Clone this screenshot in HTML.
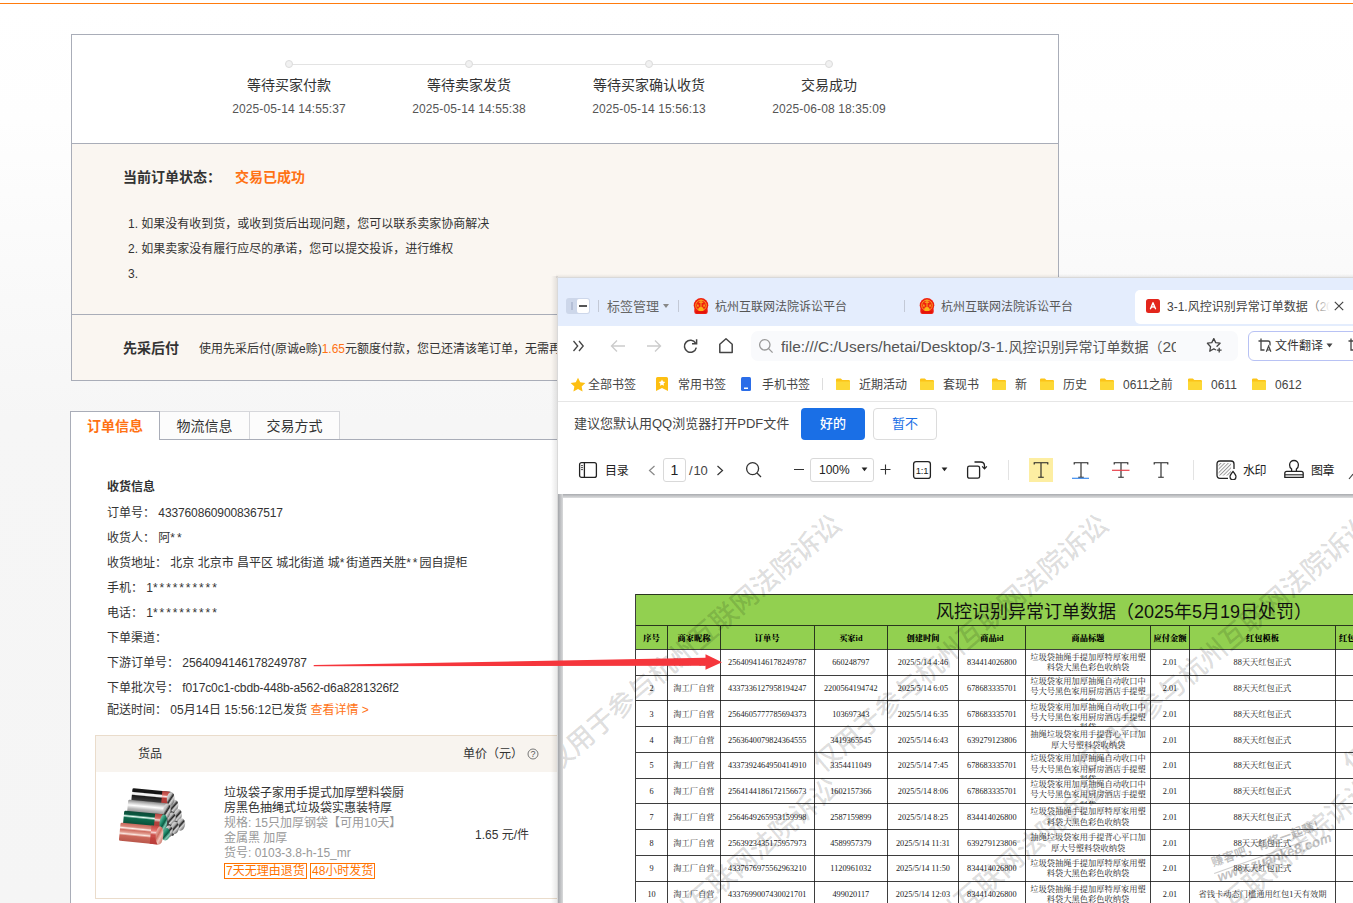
<!DOCTYPE html>
<html lang="zh-CN">
<head>
<meta charset="utf-8">
<title>订单详情</title>
<style>
*{box-sizing:border-box;margin:0;padding:0}
html,body{width:1353px;height:903px;overflow:hidden;background:#f6f6f6}
body{background:linear-gradient(180deg,#fff 0,#fefefe 120px,#f9f9f9 300px,#f6f6f6 420px,#f5f5f5 100%)}
body{position:relative;font-family:"Liberation Sans","Noto Sans CJK SC",sans-serif;font-size:12px;color:#333;-webkit-font-smoothing:antialiased}
.abs{position:absolute;white-space:nowrap}
.topline{left:0;top:3px;width:1353px;height:1px;background:#ff7b0d}
/* left page */
.box1{left:71px;top:34px;width:988px;height:347px;border:1px solid #a9adb8;background:#fff}
.box1 .beige1{left:0;top:108px;width:986px;height:171px;background:#faf6f1;border-top:1px solid #a9adb8}
.box1 .beige2{left:0;top:279px;width:986px;height:66px;background:#faf6f1;border-top:1px solid #a9adb8}
.stepline{left:289px;top:64px;width:540px;height:1px;background:#e3e3e3}
.dot{width:8px;height:8px;border-radius:50%;background:#f1f1f1;border:1px solid #dcdcdc}
.st{font-size:14px;color:#333;text-align:center;width:180px;line-height:20px}
.sd{font-size:12px;color:#555;text-align:center;width:180px;line-height:16px;margin-top:1px;letter-spacing:.12px}
.t12{font-size:12px;line-height:16px;color:#333;margin-top:1px}
.or{color:#ff7214}
.tabs{left:70px;top:411px;height:29px}
.tab{top:0;height:28px;border:1px solid #d6d7db;border-left:none;border-bottom:none;background:#fcfcfc;font-size:14px;line-height:28px;text-align:center;color:#333}
.tab.act{border:1px solid #a9adb8;border-bottom:none;background:#fff;color:#ff7214;font-weight:bold;height:29px;line-height:29px}
.info{font-size:12px;line-height:16px;color:#333}

/* browser overlay : children use page coordinates */
.br{left:0;top:0;width:1353px;height:903px;clip-path:inset(277px 0 0 557px)}
.br .win{left:558px;top:278px;width:795px;height:625px;background:#fff}
.br .shadowL{left:550px;top:278px;width:8px;height:625px;background:linear-gradient(90deg,rgba(0,0,0,0),rgba(0,0,0,.13))}
.tabstrip{left:558px;top:278px;width:795px;height:48px;background:#e4edfd}
.tt{font-size:12px;line-height:16px;color:#555}
.bk{font-size:12px;line-height:16px;color:#444}
.sep{width:1px;background:#c3c9d6}
.fold{width:14px;height:12px}

.ptitle{font-family:"Liberation Sans","Noto Sans CJK SC",sans-serif;font-size:18px;line-height:26px;color:#111;font-weight:400}
.ph{font-family:"Liberation Serif","Noto Serif CJK SC",serif;font-size:8.25px;font-weight:900;color:#000;text-align:center}
.pc{font-family:"Liberation Serif","Noto Serif CJK SC",serif;font-size:8.25px;color:#222;text-align:center}
.pm{line-height:10.3px}
.gl{background:rgba(20,20,20,.82)}
.wm{font-family:"Liberation Sans","Noto Sans CJK SC",sans-serif;font-size:27px;line-height:38px;font-weight:500;color:rgba(0,0,0,.14);transform-origin:13.5px 19px;transform:rotate(-40.6deg)}
.ast{letter-spacing:1.9px}
.n{letter-spacing:-.12px}
.fw{font-size:21px;line-height:24px;letter-spacing:2.6px;color:rgba(0,0,0,.016);pointer-events:none}
</style>
</head>
<body>
<svg width="0" height="0" style="position:absolute"><defs>
<g id="fold"><path d="M0 1.6Q0 .4 1.2 .4h3.6l1.6 1.7h6.4q1.2 0 1.2 1.2v7.5q0 1.2-1.2 1.2H1.2Q0 12 0 10.8z" fill="#fcc419"/><path d="M0 3.4h14v7.4q0 1.2-1.2 1.2H1.2Q0 12 0 10.8z" fill="#fdd835"/></g>
<g id="court"><rect x="1.3" y="9.500" width="13.400" height="6.400" rx="2.200" fill="#ee1c10"/><circle cx="8" cy="7.300" r="7.300" fill="#f0200f"/><circle cx="8" cy="7.400" r="5.300" fill="none" stroke="#f7a325" stroke-width="1"/><path d="M8 1.600v8.400M6.600 2.900h2.800M5.800 4.300h4.400" stroke="#f9a820" stroke-width="1" fill="none"/><path d="M3.800 8.600l1.100-2.800 1.100 2.800zM10 8.600l1.100-2.800 1.100 2.800z" fill="#fbb81a"/><ellipse cx="8" cy="11.200" rx="2.700" ry="2.100" fill="#fbb416"/><path d="M3 14h10" stroke="#e01408" stroke-width="1.600"/></g>
<g id="tee"><path d="M1.200 3.600V1.800h13.600v1.800M8 1.800v14.400M5.200 16.300h5.600" stroke="#222" stroke-width="1.100" fill="none"/></g>
</defs></svg>
<div class="abs topline"></div>

<!-- ========== LEFT PAGE ========== -->
<div class="abs box1">
  <div class="abs beige1"></div>
  <div class="abs beige2"></div>
</div>
<div class="abs stepline"></div>
<div class="abs dot" style="left:285px;top:60px"></div>
<div class="abs dot" style="left:465px;top:60px"></div>
<div class="abs dot" style="left:645px;top:60px"></div>
<div class="abs dot" style="left:825px;top:60px"></div>
<div class="abs st" style="left:199px;top:75px">等待买家付款</div>
<div class="abs st" style="left:379px;top:75px">等待卖家发货</div>
<div class="abs st" style="left:559px;top:75px">等待买家确认收货</div>
<div class="abs st" style="left:739px;top:75px">交易成功</div>
<div class="abs sd" style="left:199px;top:100px">2025-05-14 14:55:37</div>
<div class="abs sd" style="left:379px;top:100px">2025-05-14 14:55:38</div>
<div class="abs sd" style="left:559px;top:100px">2025-05-14 15:56:13</div>
<div class="abs sd" style="left:739px;top:100px">2025-06-08 18:35:09</div>

<div class="abs" style="left:123px;top:167px;font-size:14px;line-height:20px;font-weight:bold;color:#333">当前订单状态：</div>
<div class="abs or" style="left:235px;top:167px;font-size:14px;line-height:20px;font-weight:bold">交易已成功</div>
<div class="abs t12" style="left:128px;top:215px">1. 如果没有收到货，或收到货后出现问题，您可以联系卖家协商解决</div>
<div class="abs t12" style="left:128px;top:240px">2. 如果卖家没有履行应尽的承诺，您可以提交投诉，进行维权</div>
<div class="abs t12" style="left:128px;top:265px">3.</div>

<div class="abs" style="left:123px;top:338px;font-size:14px;line-height:20px;font-weight:bold;color:#333">先采后付</div>
<div class="abs t12" style="left:199px;top:340px">使用先采后付(原诚e赊)<span class="or">1.65</span>元额度付款，您已还清该笔订单，无需再</div>

<!-- tabs -->
<div class="abs" id="panel" style="left:71px;top:440px;width:500px;height:463px;background:#fff"></div>
<div class="abs" style="left:160px;top:439px;width:400px;height:1px;background:#a9adb8"></div>
<div class="abs" style="left:70px;top:420px;width:1px;height:483px;background:#a9adb8"></div>
<div class="abs tab act" style="left:70px;top:411px;width:90px">订单信息</div>
<div class="abs tab" style="left:160px;top:411px;width:90px">物流信息</div>
<div class="abs tab" style="left:250px;top:411px;width:90px">交易方式</div>

<div class="abs info" style="left:107px;top:479px;font-weight:bold">收货信息</div>
<div class="abs info" style="left:107px;top:505px">订单号： <span class="n">4337608609008367517</span></div>
<div class="abs info" style="left:107px;top:530px">收货人： 阿<span class="ast">**</span></div>
<div class="abs info" style="left:107px;top:555px">收货地址： 北京 北京市 昌平区 城北街道 城<span class="ast">*</span>街道西关胜<span class="ast">**</span>园自提柜</div>
<div class="abs info" style="left:107px;top:580px">手机： 1<span class="ast">**********</span></div>
<div class="abs info" style="left:107px;top:605px">电话： 1<span class="ast">**********</span></div>
<div class="abs info" style="left:107px;top:630px">下单渠道：</div>
<div class="abs info" style="left:107px;top:655px">下游订单号： <span class="n">2564094146178249787</span></div>
<div class="abs info" style="left:107px;top:680px">下单批次号： <span class="n">f017c0c1-cbdb-448b-a562-d6a8281326f2</span></div>
<div class="abs info" style="left:107px;top:702px">配送时间： 05月14日 15:56:12已发货 <span class="or">查看详情 &gt;</span></div>

<div class="abs fw" style="left:1120px;top:6px">20CUB96A</div>
<div class="abs fw" style="left:869px;top:6px">20CUB96A</div>
<div class="abs fw" style="left:618px;top:6px">20CUB96A</div>
<div class="abs fw" style="left:367px;top:6px">20CUB96A</div>
<div class="abs fw" style="left:116px;top:6px">20CUB96A</div>
<div class="abs fw" style="left:1219px;top:56px">20CUB96A</div>
<div class="abs fw" style="left:968px;top:56px">20CUB96A</div>
<div class="abs fw" style="left:717px;top:56px">20CUB96A</div>
<div class="abs fw" style="left:466px;top:56px">20CUB96A</div>
<div class="abs fw" style="left:215px;top:56px">20CUB96A</div>
<div class="abs fw" style="left:1120px;top:107px">20CUB96A</div>
<div class="abs fw" style="left:869px;top:107px">20CUB96A</div>
<div class="abs fw" style="left:618px;top:107px">20CUB96A</div>
<div class="abs fw" style="left:367px;top:107px">20CUB96A</div>
<div class="abs fw" style="left:116px;top:107px">20CUB96A</div>
<div class="abs fw" style="left:1219px;top:157px">20CUB96A</div>
<div class="abs fw" style="left:968px;top:157px">20CUB96A</div>
<div class="abs fw" style="left:717px;top:157px">20CUB96A</div>
<div class="abs fw" style="left:466px;top:157px">20CUB96A</div>
<div class="abs fw" style="left:215px;top:157px">20CUB96A</div>
<div class="abs fw" style="left:1120px;top:207px">20CUB96A</div>
<div class="abs fw" style="left:869px;top:207px">20CUB96A</div>
<div class="abs fw" style="left:618px;top:207px">20CUB96A</div>
<div class="abs fw" style="left:367px;top:207px">20CUB96A</div>
<div class="abs fw" style="left:116px;top:207px">20CUB96A</div>
<div class="abs fw" style="left:1219px;top:257px">20CUB96A</div>
<div class="abs fw" style="left:968px;top:257px">20CUB96A</div>
<div class="abs fw" style="left:717px;top:257px">20CUB96A</div>
<div class="abs fw" style="left:466px;top:257px">20CUB96A</div>
<div class="abs fw" style="left:215px;top:257px">20CUB96A</div>
<div class="abs fw" style="left:1120px;top:308px">20CUB96A</div>
<div class="abs fw" style="left:869px;top:308px">20CUB96A</div>
<div class="abs fw" style="left:618px;top:308px">20CUB96A</div>
<div class="abs fw" style="left:367px;top:308px">20CUB96A</div>
<div class="abs fw" style="left:116px;top:308px">20CUB96A</div>
<div class="abs fw" style="left:1219px;top:358px">20CUB96A</div>
<div class="abs fw" style="left:968px;top:358px">20CUB96A</div>
<div class="abs fw" style="left:717px;top:358px">20CUB96A</div>
<div class="abs fw" style="left:466px;top:358px">20CUB96A</div>
<div class="abs fw" style="left:215px;top:358px">20CUB96A</div>
<div class="abs fw" style="left:1120px;top:408px">20CUB96A</div>
<div class="abs fw" style="left:869px;top:408px">20CUB96A</div>
<div class="abs fw" style="left:618px;top:408px">20CUB96A</div>
<div class="abs fw" style="left:367px;top:408px">20CUB96A</div>
<div class="abs fw" style="left:116px;top:408px">20CUB96A</div>
<div class="abs fw" style="left:1219px;top:458px">20CUB96A</div>
<div class="abs fw" style="left:968px;top:458px">20CUB96A</div>
<div class="abs fw" style="left:717px;top:458px">20CUB96A</div>
<div class="abs fw" style="left:466px;top:458px">20CUB96A</div>
<div class="abs fw" style="left:215px;top:458px">20CUB96A</div>
<div class="abs fw" style="left:1120px;top:508px">20CUB96A</div>
<div class="abs fw" style="left:869px;top:508px">20CUB96A</div>
<div class="abs fw" style="left:618px;top:508px">20CUB96A</div>
<div class="abs fw" style="left:367px;top:508px">20CUB96A</div>
<div class="abs fw" style="left:116px;top:508px">20CUB96A</div>
<div class="abs fw" style="left:1219px;top:559px">20CUB96A</div>
<div class="abs fw" style="left:968px;top:559px">20CUB96A</div>
<div class="abs fw" style="left:717px;top:559px">20CUB96A</div>
<div class="abs fw" style="left:466px;top:559px">20CUB96A</div>
<div class="abs fw" style="left:215px;top:559px">20CUB96A</div>
<div class="abs fw" style="left:1120px;top:609px">20CUB96A</div>
<div class="abs fw" style="left:869px;top:609px">20CUB96A</div>
<div class="abs fw" style="left:618px;top:609px">20CUB96A</div>
<div class="abs fw" style="left:367px;top:609px">20CUB96A</div>
<div class="abs fw" style="left:116px;top:609px">20CUB96A</div>
<div class="abs fw" style="left:1219px;top:659px">20CUB96A</div>
<div class="abs fw" style="left:968px;top:659px">20CUB96A</div>
<div class="abs fw" style="left:717px;top:659px">20CUB96A</div>
<div class="abs fw" style="left:466px;top:659px">20CUB96A</div>
<div class="abs fw" style="left:215px;top:659px">20CUB96A</div>
<div class="abs fw" style="left:1120px;top:709px">20CUB96A</div>
<div class="abs fw" style="left:869px;top:709px">20CUB96A</div>
<div class="abs fw" style="left:618px;top:709px">20CUB96A</div>
<div class="abs fw" style="left:367px;top:709px">20CUB96A</div>
<div class="abs fw" style="left:116px;top:709px">20CUB96A</div>
<div class="abs fw" style="left:1219px;top:760px">20CUB96A</div>
<div class="abs fw" style="left:968px;top:760px">20CUB96A</div>
<div class="abs fw" style="left:717px;top:760px">20CUB96A</div>
<div class="abs fw" style="left:466px;top:760px">20CUB96A</div>
<div class="abs fw" style="left:215px;top:760px">20CUB96A</div>
<div class="abs fw" style="left:1120px;top:810px">20CUB96A</div>
<div class="abs fw" style="left:869px;top:810px">20CUB96A</div>
<div class="abs fw" style="left:618px;top:810px">20CUB96A</div>
<div class="abs fw" style="left:367px;top:810px">20CUB96A</div>
<div class="abs fw" style="left:116px;top:810px">20CUB96A</div>
<div class="abs fw" style="left:1219px;top:860px">20CUB96A</div>
<div class="abs fw" style="left:968px;top:860px">20CUB96A</div>
<div class="abs fw" style="left:717px;top:860px">20CUB96A</div>
<div class="abs fw" style="left:466px;top:860px">20CUB96A</div>
<div class="abs fw" style="left:215px;top:860px">20CUB96A</div>
<!-- product table -->
<div class="abs" style="left:95px;top:735px;width:480px;height:164px;border:1px solid #eadccb;background:#fff"></div>
<div class="abs" style="left:96px;top:736px;width:470px;height:36px;background:#f8f4ef"></div>
<div class="abs info" style="left:138px;top:746px">货品</div>
<div class="abs info" style="left:463px;top:746px">单价（元）</div>
<svg class="abs" style="left:527px;top:748px" width="12" height="12" viewBox="0 0 12 12"><circle cx="6" cy="6" r="5" stroke="#777" stroke-width="1" fill="none"/><text x="6" y="9.200" font-size="9" text-anchor="middle" fill="#555" font-family="Liberation Sans, sans-serif">?</text></svg>
<div class="abs info" style="left:224px;top:785.500px;line-height:15px">垃圾袋子家用手提式加厚塑料袋厨<br>房黑色抽绳式垃圾袋实惠装特厚<br><span style="color:#999">规格: 15只加厚钢袋【可用10天】<br>金属黑 加厚<br>货号: 0103-3.8-h-15_mr</span></div>
<div class="abs" style="left:224px;top:863px;height:16px;border:1px solid #ff7300;color:#ff7300;font-size:12px;line-height:14px;padding:0 1px">7天无理由退货</div>
<div class="abs" style="left:310px;top:863px;height:16px;border:1px solid #ff7300;color:#ff7300;font-size:12px;line-height:14px;padding:0 1px">48小时发货</div>
<div class="abs info" style="left:475px;top:827px">1.65 元/件</div>
<svg class="abs" style="left:110px;top:780px" width="90" height="70" viewBox="0 0 90 70">
<defs>
<linearGradient id="gK" x1="0" y1="0" x2="0" y2="1"><stop offset="0" stop-color="#1a1a1a"/><stop offset=".22" stop-color="#111"/><stop offset=".3" stop-color="#f4f4f4"/><stop offset=".42" stop-color="#eee"/><stop offset=".5" stop-color="#1b1b1b"/><stop offset=".8" stop-color="#3a3a3a"/><stop offset="1" stop-color="#111"/></linearGradient>
<linearGradient id="gS" x1="0" y1="0" x2="0" y2="1"><stop offset="0" stop-color="#8a8a8a"/><stop offset=".2" stop-color="#cfcfcf"/><stop offset=".35" stop-color="#fdfdfd"/><stop offset=".55" stop-color="#bdbdbd"/><stop offset=".8" stop-color="#8d8d8d"/><stop offset="1" stop-color="#666"/></linearGradient>
<linearGradient id="gG" x1="0" y1="0" x2="0" y2="1"><stop offset="0" stop-color="#0d4a37"/><stop offset=".2" stop-color="#0a5a41"/><stop offset=".3" stop-color="#eafff6"/><stop offset=".4" stop-color="#0f6b4e"/><stop offset=".75" stop-color="#0a4f39"/><stop offset="1" stop-color="#063525"/></linearGradient>
<linearGradient id="gC" x1="0" y1="0" x2="0" y2="1"><stop offset="0" stop-color="#c8675b"/><stop offset=".18" stop-color="#d98a7d"/><stop offset=".26" stop-color="#fff1ec"/><stop offset=".36" stop-color="#cf6f62"/><stop offset=".5" stop-color="#e3a093"/><stop offset=".58" stop-color="#fbe6df"/><stop offset=".68" stop-color="#cc6a5c"/><stop offset="1" stop-color="#b9574b"/></linearGradient>
<linearGradient id="gBand" x1="0" y1="0" x2="0" y2="1"><stop offset="0" stop-color="#c8433f"/><stop offset=".28" stop-color="#e46e68"/><stop offset=".36" stop-color="#fbe0de"/><stop offset=".5" stop-color="#c8403c"/><stop offset="1" stop-color="#b83a38"/></linearGradient>
<linearGradient id="capS" x1="0" y1="0" x2="1" y2="1"><stop offset="0" stop-color="#f2f2f2"/><stop offset=".35" stop-color="#b5b5b5"/><stop offset=".5" stop-color="#222"/><stop offset=".62" stop-color="#d8d8d8"/><stop offset="1" stop-color="#222"/></linearGradient>
<linearGradient id="capG" x1="0" y1="0" x2="1" y2="1"><stop offset="0" stop-color="#9adbc7"/><stop offset=".4" stop-color="#1f8a6a"/><stop offset=".55" stop-color="#0b5c44"/><stop offset=".7" stop-color="#7fcab3"/><stop offset="1" stop-color="#0b5c44"/></linearGradient>
<linearGradient id="capC" x1="0" y1="0" x2="1" y2="1"><stop offset="0" stop-color="#f6d4cc"/><stop offset=".4" stop-color="#cf6f62"/><stop offset=".6" stop-color="#f3c4ba"/><stop offset="1" stop-color="#b9574b"/></linearGradient>
</defs>
<path d="M58 16L71 44L63 56L54 53z" fill="#444"/>
<ellipse cx="64.2" cy="25.8" rx="4.0920000000000005" ry="6.2" fill="url(#capS)" transform="rotate(8 64.2 25.8)"/>
<ellipse cx="67.8" cy="35.2" rx="4.0920000000000005" ry="6.2" fill="url(#capS)" transform="rotate(8 67.8 35.2)"/>
<ellipse cx="71" cy="44.5" rx="4.0920000000000005" ry="6.2" fill="url(#capS)" transform="rotate(8 71 44.5)"/>
<ellipse cx="61.6" cy="38.6" rx="4.0920000000000005" ry="6.2" fill="url(#capS)" transform="rotate(8 61.6 38.6)"/>
<ellipse cx="64.8" cy="47.9" rx="4.0920000000000005" ry="6.2" fill="url(#capS)" transform="rotate(8 64.8 47.9)"/>
<ellipse cx="58.6" cy="51.6" rx="4.0920000000000005" ry="6.2" fill="url(#capS)" transform="rotate(8 58.6 51.6)"/>
<ellipse cx="55.8" cy="54.2" rx="4.224" ry="6.4" fill="url(#capG)" transform="rotate(8 55.8 54.2)"/>
<g transform="translate(22.5 8.2) rotate(5.500)"><rect x="0" y="0" width="39.5" height="14.2" rx="1.500" fill="url(#gK)"/><rect x="30.0" y="0" width="7.500" height="14.2" fill="url(#gBand)" opacity=".9"/><ellipse cx="39.0" cy="7.1" rx="3.800" ry="7.1" fill="url(#capS)"/></g>
<g transform="translate(18.3 19.6) rotate(5.500)"><rect x="0" y="0" width="40" height="15.2" rx="1.500" fill="url(#gS)"/><ellipse cx="39.5" cy="7.6" rx="3.800" ry="7.6" fill="url(#capS)"/></g>
<g transform="translate(14.3 30.6) rotate(5.500)"><rect x="0" y="0" width="40.5" height="16.8" rx="1.500" fill="url(#gG)"/><rect x="31.0" y="0" width="7.500" height="16.8" fill="url(#gBand)" opacity=".9"/><ellipse cx="40.0" cy="8.4" rx="3.800" ry="8.4" fill="url(#capG)"/></g>
<g transform="translate(10.6 42.6) rotate(5.500)"><rect x="0" y="0" width="40.5" height="18.2" rx="1.500" fill="url(#gC)"/><rect x="31.0" y="0" width="7.500" height="18.2" fill="url(#gBand)" opacity=".9"/><ellipse cx="40.0" cy="9.1" rx="3.800" ry="9.1" fill="url(#capC)"/></g>
</svg>
<!-- ========== BROWSER WINDOW ========== -->
<div class="abs" id="winshadow" style="left:551px;top:276px;width:7px;height:627px;background:linear-gradient(90deg,rgba(0,0,0,0),rgba(0,0,0,.10))"></div>
<div class="abs" style="left:556px;top:274px;width:797px;height:4px;background:linear-gradient(180deg,rgba(0,0,0,0),rgba(0,0,0,.09))"></div>
<div class="abs br">
  <div class="abs" style="left:557px;top:277px;width:796px;height:626px;background:#d9d9d9"></div>
  <div class="abs win"></div>
  <div class="abs tabstrip"></div>
  <!-- toggle -->
  <div class="abs" style="left:566px;top:298px;width:24px;height:16px;border-radius:3px;background:#cdd7ea"></div>
  <div class="abs" style="left:571px;top:302px;width:2px;height:8px;background:#b4bfd6"></div>
  <div class="abs" style="left:577px;top:299px;width:12px;height:14px;border-radius:2px;background:#fff"></div>
  <div class="abs" style="left:579px;top:305px;width:8px;height:2px;background:#555"></div>
  <div class="abs sep" style="left:598px;top:300px;height:12px"></div>
  <div class="abs" style="left:607px;top:298px;font-size:13px;line-height:18px;color:#666">标签管理</div>
  <svg class="abs" style="left:662px;top:303px" width="8" height="6" viewBox="0 0 8 6"><path d="M1 1h6l-3 4z" fill="#888"/></svg>
  <div class="abs sep" style="left:678px;top:300px;height:12px"></div>
  <!-- tab 1 -->
  <svg class="abs" style="left:693px;top:298px" width="16" height="16" viewBox="0 0 16 16"><use href="#court"/></svg>
  <div class="abs tt" style="left:715px;top:299px">杭州互联网法院诉讼平台</div>
  <div class="abs sep" style="left:904px;top:300px;height:12px"></div>
  <!-- tab 2 -->
  <svg class="abs" style="left:919px;top:298px" width="16" height="16" viewBox="0 0 16 16"><use href="#court"/></svg>
  <div class="abs tt" style="left:941px;top:299px">杭州互联网法院诉讼平台</div>
  <!-- active tab -->
  <div class="abs" style="left:1135px;top:290px;width:230px;height:34px;border-radius:5px;background:#fff"></div>
  <svg class="abs" style="left:1146px;top:299px" width="14" height="14" viewBox="0 0 14 14"><rect width="14" height="14" rx="2.5" fill="#e3261c"/><path d="M7 3.800L4.500 9.700M7 3.800L9.500 9.700M5 8.500Q7 7.300 9 8.500" stroke="#fff" stroke-width="1.400" fill="none" stroke-linecap="round"/></svg>
  <div class="abs tt" style="left:1167px;top:299px;width:163px;overflow:hidden;color:#444">3-1.风控识别异常订单数据（20</div>
  <div class="abs" style="left:1310px;top:296px;width:20px;height:20px;background:linear-gradient(90deg,rgba(255,255,255,0),#fff)"></div>
  <svg class="abs" style="left:1334px;top:301px" width="10" height="10" viewBox="0 0 10 10"><path d="M.8 .8l8.4 8.4M9.2 .8L.8 9.2" stroke="#444" stroke-width="1.2"/></svg>

  <!-- nav row -->
  <svg class="abs" style="left:572px;top:340px" width="13" height="12" viewBox="0 0 13 12"><path d="M1.5 1l4.2 5-4.2 5M7 1l4.2 5L7 11" stroke="#444" stroke-width="1.3" fill="none"/></svg>
  <svg class="abs" style="left:610px;top:339px" width="16" height="14" viewBox="0 0 16 14"><path d="M15 7H1.5M7 1.5L1.5 7 7 12.5" stroke="#ccc" stroke-width="1.4" fill="none"/></svg>
  <svg class="abs" style="left:646px;top:339px" width="16" height="14" viewBox="0 0 16 14"><path d="M1 7h13.5M9 1.5L14.5 7 9 12.5" stroke="#ccc" stroke-width="1.4" fill="none"/></svg>
  <svg class="abs" style="left:682px;top:338px" width="17" height="16" viewBox="0 0 17 16"><path d="M13.6 5.2A6 6 0 1 0 14.3 9.6" stroke="#444" stroke-width="1.5" fill="none"/><path d="M14.6 1.2v4.6H10" stroke="#444" stroke-width="1.5" fill="none"/></svg>
  <svg class="abs" style="left:718px;top:337px" width="16" height="17" viewBox="0 0 16 17"><path d="M1.8 15.5V7.2L8 1.8l6.2 5.4v8.3z" stroke="#444" stroke-width="1.5" fill="none" stroke-linejoin="round"/></svg>
  <!-- url bar -->
  <div class="abs" style="left:751px;top:331px;width:487px;height:30px;border-radius:7px;background:#f9fafc"></div>
  <svg class="abs" style="left:758px;top:338px" width="16" height="16" viewBox="0 0 16 16"><circle cx="6.8" cy="6.8" r="5.2" stroke="#999" stroke-width="1.3" fill="none"/><path d="M10.6 10.6l4 4" stroke="#999" stroke-width="1.3"/></svg>
  <div class="abs" id="url" style="left:781px;top:336px;width:395px;overflow:hidden;font-size:15.500px;line-height:22px;color:#555">file:///C:/Users/hetai/Desktop/3-1.<span style="font-size:14px">风控识别异常订单数据（</span>20</div>
  <svg class="abs" style="left:1206px;top:337px" width="17" height="17" viewBox="0 0 17 17"><path d="M7.800 1.600l1.900 4 4.400.6-3.100 3M5.300 13.300l-1.500.9.800-4.500L1.400 6.200l4.400-.6 2-4M5.300 13.300l2.500-1.400 1.700.9" stroke="#444" stroke-width="1.300" fill="none" stroke-linejoin="round" stroke-linecap="round"/><path d="M13.200 10.800v4.800M10.800 13.200h4.800" stroke="#444" stroke-width="1.300"/></svg>
  <!-- translate button -->
  <div class="abs" style="left:1248px;top:331px;width:130px;height:30px;border-radius:6px;border:1px solid #b8c2f4;background:#fff"></div>
  <svg class="abs" style="left:1258px;top:338px" width="15" height="15" viewBox="0 0 15 15"><path d="M3 .500v2.500M.500 3h2.500M3 3h7q2 0 2 2v2.500M3 3v9h3.500" stroke="#444" stroke-width="1.300" fill="none"/><path d="M8.300 13.800l2.300-5.600 2.300 5.600M9.100 12h3" stroke="#444" stroke-width="1.200" fill="none"/></svg>
  <div class="abs" style="left:1275px;top:338px;font-size:12px;line-height:16px;color:#333">文件翻译</div>
  <svg class="abs" style="left:1326px;top:343px" width="7" height="5" viewBox="0 0 7 5"><path d="M.5 .5h6l-3 4z" fill="#444"/></svg>
  <svg class="abs" style="left:1348px;top:338px" width="15" height="15" viewBox="0 0 15 15"><path d="M3 .500v2.500M.500 3h2.500M3 3h7M3 3v9h3.500" stroke="#444" stroke-width="1.300" fill="none"/></svg>

  <!-- bookmarks row -->
  <svg class="abs" style="left:569.500px;top:376.500px" width="16" height="15" viewBox="0 0 15 14"><path d="M7.5 .6l2.1 4.4 4.8.6-3.5 3.3.9 4.7-4.3-2.3-4.3 2.3.9-4.7L.6 5.6l4.8-.6z" fill="#fdbf12"/></svg>
  <div class="abs bk" style="margin-top:1px;left:588px;top:376px">全部书签</div>
  <svg class="abs" style="left:656px;top:377px" width="12" height="14" viewBox="0 0 12 14"><path d="M0 1.5Q0 0 1.5 0h9Q12 0 12 1.5V14l-6-3-6 3z" fill="#fdbf12"/><path d="M6 2.5l1 2.1 2.3.3-1.7 1.6.4 2.3L6 7.7 4 8.8l.4-2.3-1.7-1.6L5 4.6z" fill="#fff"/></svg>
  <div class="abs bk" style="margin-top:1px;left:678px;top:376px">常用书签</div>
  <svg class="abs" style="left:741px;top:377px" width="10" height="14" viewBox="0 0 10 14"><rect width="10" height="14" rx="1.5" fill="#2b6de8"/><rect x="3" y="10.5" width="4" height="1.5" fill="#fff"/></svg>
  <div class="abs bk" style="margin-top:1px;left:762px;top:376px">手机书签</div>
  <div class="abs sep" style="left:822px;top:378px;height:12px;background:#ddd"></div>
  <svg class="abs fold" style="left:836px;top:378px" viewBox="0 0 14 12"><use href="#fold"/></svg>
  <div class="abs bk" style="margin-top:1px;left:859px;top:376px">近期活动</div>
  <svg class="abs fold" style="left:920px;top:378px" viewBox="0 0 14 12"><use href="#fold"/></svg>
  <div class="abs bk" style="margin-top:1px;left:943px;top:376px">套现书</div>
  <svg class="abs fold" style="left:992px;top:378px" viewBox="0 0 14 12"><use href="#fold"/></svg>
  <div class="abs bk" style="margin-top:1px;left:1015px;top:376px">新</div>
  <svg class="abs fold" style="left:1040px;top:378px" viewBox="0 0 14 12"><use href="#fold"/></svg>
  <div class="abs bk" style="margin-top:1px;left:1063px;top:376px">历史</div>
  <svg class="abs fold" style="left:1100px;top:378px" viewBox="0 0 14 12"><use href="#fold"/></svg>
  <div class="abs bk" style="margin-top:1px;left:1123px;top:376px">0611之前</div>
  <svg class="abs fold" style="left:1188px;top:378px" viewBox="0 0 14 12"><use href="#fold"/></svg>
  <div class="abs bk" style="margin-top:1px;left:1211px;top:376px">0611</div>
  <svg class="abs fold" style="left:1252px;top:378px" viewBox="0 0 14 12"><use href="#fold"/></svg>
  <div class="abs bk" style="margin-top:1px;left:1275px;top:376px">0612</div>
  <div class="abs" style="left:558px;top:401px;width:795px;height:1px;background:#e6e6e6"></div>

  <!-- prompt row -->
  <div class="abs" style="left:574px;top:415px;font-size:13px;line-height:18px;color:#444">建议您默认用QQ浏览器打开PDF文件</div>
  <div class="abs" style="left:801px;top:408px;width:64px;height:32px;border-radius:4px;background:#1a6fe6;color:#fff;font-size:13px;line-height:32px;text-align:center;font-weight:500">好的</div>
  <div class="abs" style="left:873px;top:408px;width:64px;height:32px;border-radius:4px;background:#fff;border:1px solid #dcdcdc;color:#1a6fe6;font-size:13px;line-height:30px;text-align:center">暂不</div>

  <!-- pdf toolbar -->
  <svg class="abs" style="left:578px;top:461px" width="20" height="18" viewBox="0 0 20 18"><rect x="1.6" y="1.6" width="16.8" height="14.8" rx="2" stroke="#222" stroke-width="1.3" fill="none"/><path d="M6.4 1.6v14.8" stroke="#222" stroke-width="1.3"/><path d="M3.2 4.6h1.6M3.2 6.6h1.6M3.2 8.6h1.6" stroke="#222" stroke-width="1"/></svg>
  <div class="abs" style="left:605px;top:463px;font-size:12px;line-height:16px;color:#222;letter-spacing:-.3px">目录</div>
  <svg class="abs" style="left:648px;top:465px" width="8" height="11" viewBox="0 0 8 11"><path d="M6.5 1L1.5 5.5l5 4.5" stroke="#888" stroke-width="1.2" fill="none"/></svg>
  <div class="abs" style="left:663px;top:458px;width:23px;height:24px;border:1px solid #d9d9d9;border-radius:3px;font-size:14px;line-height:22px;text-align:center;color:#222">1</div>
  <div class="abs" style="left:689px;top:462px;font-size:13px;line-height:18px;color:#444;letter-spacing:-.2px">/<span style="margin-left:1px">10</span></div>
  <svg class="abs" style="left:716px;top:465px" width="8" height="11" viewBox="0 0 8 11"><path d="M1.5 1l5 4.5-5 4.500" stroke="#333" stroke-width="1.2" fill="none"/></svg>
  <svg class="abs" style="left:745px;top:461px" width="17" height="17" viewBox="0 0 17 17"><circle cx="7.6" cy="7.6" r="6" stroke="#333" stroke-width="1.3" fill="none"/><path d="M12 12l4 4" stroke="#333" stroke-width="1.3"/></svg>
  <div class="abs" style="left:794px;top:469px;width:10px;height:1px;background:#333"></div>
  <div class="abs" style="left:810px;top:458px;width:64px;height:24px;border:1px solid #d9d9d9;border-radius:3px"></div>
  <div class="abs" style="left:819px;top:462px;font-size:12px;line-height:16px;color:#222">100%</div>
  <svg class="abs" style="left:861px;top:467px" width="7" height="5" viewBox="0 0 7 5"><path d="M.6 .5h5.800L3.500 4.300z" fill="#222"/></svg>
  <svg class="abs" style="left:880px;top:464px" width="11" height="11" viewBox="0 0 11 11"><path d="M.5 5.5h10M5.5 .5v10" stroke="#333" stroke-width="1.1"/></svg>
  <svg class="abs" style="left:912px;top:460px" width="20" height="20" viewBox="0 0 20 20"><rect x="1.6" y="1.6" width="16.8" height="16.800" rx="2.500" stroke="#222" stroke-width="1.3" fill="none"/><text x="10" y="13.500" font-size="9.500" text-anchor="middle" letter-spacing="-.2" fill="#222" font-family="Liberation Sans, sans-serif">1:1</text></svg>
  <svg class="abs" style="left:941px;top:467px" width="7" height="5" viewBox="0 0 7 5"><path d="M.6 .5h5.800L3.500 4.300z" fill="#222"/></svg>
  <svg class="abs" style="left:966px;top:459px" width="22" height="21" viewBox="0 0 22 21"><rect x="1.600" y="7.200" width="12" height="12" rx="1.800" stroke="#222" stroke-width="1.300" fill="none"/><path d="M8.500 3h6q4 0 4 4v2.600" stroke="#222" stroke-width="1.300" fill="none"/><path d="M16.200 7.400l2.300 2.500 2.300-2.500" stroke="#222" stroke-width="1.300" fill="none"/></svg>
  <div class="abs sep" style="left:1008px;top:460px;height:20px;background:#e3e3e3"></div>
  <div class="abs" style="left:1029px;top:458px;width:24px;height:24px;background:#fdeea2"></div>
  <svg class="abs" style="left:1033px;top:461px" width="16" height="18" viewBox="0 0 16 18"><use href="#tee"/></svg>
  <svg class="abs" style="left:1072px;top:461px" width="18" height="18" viewBox="0 0 18 18"><g transform="translate(1 0)"><use href="#tee"/></g><path d="M0 17.300h17" stroke="#3b8cf0" stroke-width="1.200"/></svg>
  <svg class="abs" style="left:1112px;top:461px" width="18" height="18" viewBox="0 0 18 18"><g transform="translate(1 0)"><use href="#tee"/></g><path d="M0 9.300h17.500" stroke="#e8404a" stroke-width="1.200"/></svg>
  <svg class="abs" style="left:1153px;top:461px" width="16" height="18" viewBox="0 0 16 18"><use href="#tee"/></svg>
  <div class="abs sep" style="left:1193px;top:460px;height:20px;background:#e3e3e3"></div>
  <svg class="abs" style="left:1216px;top:460px" width="22" height="20" viewBox="0 0 22 20"><defs><pattern id="hat" width="2.600" height="2.600" patternUnits="userSpaceOnUse" patternTransform="rotate(45)"><rect width="1" height="2.600" fill="#9a9a9a"/></pattern></defs><rect x="2.600" y="3" width="12.500" height="12.500" fill="url(#hat)"/><path d="M12 18.300H4q-3 0-3-3V4q0-3 3-3h11q3 0 3 3v5" stroke="#222" stroke-width="1.300" fill="none"/><path d="M17 11.500q3 3.600 3 5.300a3 3 0 0 1-6 0q0-1.700 3-5.300z" stroke="#222" stroke-width="1.200" fill="#fff"/></svg>
  <div class="abs" style="left:1243px;top:463px;font-size:12px;line-height:16px;color:#222;letter-spacing:-.4px">水印</div>
  <svg class="abs" style="left:1283px;top:459px" width="22" height="21" viewBox="0 0 22 21"><path d="M8.600 12.300V10Q6.600 8.600 6.600 5.900a4.400 4.400 0 0 1 8.800 0q0 2.700-2 4.100v2.300" stroke="#222" stroke-width="1.300" fill="none"/><path d="M1.800 18.400v-4.100q0-2 2-2h14.400q2 0 2 2v4.100z" stroke="#222" stroke-width="1.300" fill="none" stroke-linejoin="round"/><path d="M2 15.800h18" stroke="#222" stroke-width="1.100"/></svg>
  <div class="abs" style="left:1311px;top:463px;font-size:12px;line-height:16px;color:#222;letter-spacing:-.4px">图章</div>
  <svg class="abs" style="left:1348px;top:472px" width="6" height="8" viewBox="0 0 6 8"><path d="M1 7l4-5" stroke="#444" stroke-width="1.200"/></svg>

  <!-- PDFVIEW-START -->
  <!-- pdf view -->
  <div class="abs" style="left:558px;top:494px;width:795px;height:409px;background:#d4d5d7"></div>
  <div class="abs" style="left:558px;top:494px;width:795px;height:4px;background:linear-gradient(180deg,#a9abaf,#dedfe0)"></div>
  <div class="abs" style="left:558px;top:494px;width:5px;height:409px;background:linear-gradient(90deg,#a4a6aa,#d9dadb)"></div>
  <div class="abs" style="left:563px;top:498px;width:790px;height:405px;background:#fff"></div>
  <div class="abs" style="left:635.5px;top:594.4px;width:717.5px;height:55px;background:#92d050"></div>
  <div class="abs ptitle" style="left:936px;top:599px">风控识别异常订单数据（2025年5月19日处罚）</div>
  <div class="abs ph" style="left:635.5px;top:625.7px;width:32px;height:23.7px;line-height:26.3px">序号</div>
  <div class="abs ph" style="left:667.5px;top:625.7px;width:52.9px;height:23.7px;line-height:26.3px">商家昵称</div>
  <div class="abs ph" style="left:720.4px;top:625.7px;width:93.6px;height:23.7px;line-height:26.3px">订单号</div>
  <div class="abs ph" style="left:814px;top:625.7px;width:73.6px;height:23.7px;line-height:26.3px">买家id</div>
  <div class="abs ph" style="left:887.6px;top:625.7px;width:70.7px;height:23.7px;line-height:26.3px">创建时间</div>
  <div class="abs ph" style="left:958.3px;top:625.7px;width:67.1px;height:23.7px;line-height:26.3px">商品id</div>
  <div class="abs ph" style="left:1025.4px;top:625.7px;width:125.3px;height:23.7px;line-height:26.3px">商品标题</div>
  <div class="abs ph" style="left:1150.7px;top:625.7px;width:38.6px;height:23.7px;line-height:26.3px">应付金额</div>
  <div class="abs ph" style="left:1189.3px;top:625.7px;width:146.3px;height:23.7px;line-height:26.3px">红包模板</div>
  <div class="abs ph" style="left:1335.6px;top:625.7px;width:39.8px;height:23.7px;line-height:26.3px">红包金额</div>
  <div class="abs pc" style="left:635.5px;top:649.4px;width:32px;height:25.75px;line-height:27.95px">1</div>
  <div class="abs pc" style="left:667.5px;top:649.4px;width:52.9px;height:25.75px;line-height:27.95px">淘工厂自营</div>
  <div class="abs pc" style="left:720.4px;top:649.4px;width:93.6px;height:25.75px;line-height:27.95px">2564094146178249787</div>
  <div class="abs pc" style="left:814px;top:649.4px;width:73.6px;height:25.75px;line-height:27.95px">660248797</div>
  <div class="abs pc" style="left:887.6px;top:649.4px;width:70.7px;height:25.75px;line-height:27.95px">2025/5/14 4:46</div>
  <div class="abs pc" style="left:958.3px;top:649.4px;width:67.1px;height:25.75px;line-height:27.95px">834414026800</div>
  <div class="abs pc pm" style="left:1025.4px;top:649.4px;width:125.3px;height:25.75px;padding-top:3.6px">垃圾袋抽绳手提加厚特厚家用塑<br>料袋大黑色彩色收纳袋</div>
  <div class="abs pc" style="left:1150.7px;top:649.4px;width:38.6px;height:25.75px;line-height:27.95px">2.01</div>
  <div class="abs pc" style="left:1189.3px;top:649.4px;width:146.3px;height:25.75px;line-height:27.95px">88天天红包正式</div>
  <div class="abs pc" style="left:635.5px;top:675.15px;width:32px;height:25.75px;line-height:27.95px">2</div>
  <div class="abs pc" style="left:667.5px;top:675.15px;width:52.9px;height:25.75px;line-height:27.95px">淘工厂自营</div>
  <div class="abs pc" style="left:720.4px;top:675.15px;width:93.6px;height:25.75px;line-height:27.95px">4337336127958194247</div>
  <div class="abs pc" style="left:814px;top:675.15px;width:73.6px;height:25.75px;line-height:27.95px">2200564194742</div>
  <div class="abs pc" style="left:887.6px;top:675.15px;width:70.7px;height:25.75px;line-height:27.95px">2025/5/14 6:05</div>
  <div class="abs pc" style="left:958.3px;top:675.15px;width:67.1px;height:25.75px;line-height:27.95px">678683335701</div>
  <div class="abs pc pm" style="left:1025.4px;top:675.15px;width:125.3px;height:25.75px;padding-top:2px;overflow:hidden">垃圾袋家用加厚抽绳自动收口中<br>号大号黑色家用厨房酒店手提塑<br>料袋</div>
  <div class="abs pc" style="left:1150.7px;top:675.15px;width:38.6px;height:25.75px;line-height:27.95px">2.01</div>
  <div class="abs pc" style="left:1189.3px;top:675.15px;width:146.3px;height:25.75px;line-height:27.95px">88天天红包正式</div>
  <div class="abs pc" style="left:635.5px;top:700.9px;width:32px;height:25.75px;line-height:27.95px">3</div>
  <div class="abs pc" style="left:667.5px;top:700.9px;width:52.9px;height:25.75px;line-height:27.95px">淘工厂自营</div>
  <div class="abs pc" style="left:720.4px;top:700.9px;width:93.6px;height:25.75px;line-height:27.95px">2564605777785694373</div>
  <div class="abs pc" style="left:814px;top:700.9px;width:73.6px;height:25.75px;line-height:27.95px">103697343</div>
  <div class="abs pc" style="left:887.6px;top:700.9px;width:70.7px;height:25.75px;line-height:27.95px">2025/5/14 6:35</div>
  <div class="abs pc" style="left:958.3px;top:700.9px;width:67.1px;height:25.75px;line-height:27.95px">678683335701</div>
  <div class="abs pc pm" style="left:1025.4px;top:700.9px;width:125.3px;height:25.75px;padding-top:2px;overflow:hidden">垃圾袋家用加厚抽绳自动收口中<br>号大号黑色家用厨房酒店手提塑<br>料袋</div>
  <div class="abs pc" style="left:1150.7px;top:700.9px;width:38.6px;height:25.75px;line-height:27.95px">2.01</div>
  <div class="abs pc" style="left:1189.3px;top:700.9px;width:146.3px;height:25.75px;line-height:27.95px">88天天红包正式</div>
  <div class="abs pc" style="left:635.5px;top:726.65px;width:32px;height:25.75px;line-height:27.95px">4</div>
  <div class="abs pc" style="left:667.5px;top:726.65px;width:52.9px;height:25.75px;line-height:27.95px">淘工厂自营</div>
  <div class="abs pc" style="left:720.4px;top:726.65px;width:93.6px;height:25.75px;line-height:27.95px">2563640079824364555</div>
  <div class="abs pc" style="left:814px;top:726.65px;width:73.6px;height:25.75px;line-height:27.95px">3419365545</div>
  <div class="abs pc" style="left:887.6px;top:726.65px;width:70.7px;height:25.75px;line-height:27.95px">2025/5/14 6:43</div>
  <div class="abs pc" style="left:958.3px;top:726.65px;width:67.1px;height:25.75px;line-height:27.95px">639279123806</div>
  <div class="abs pc pm" style="left:1025.4px;top:726.65px;width:125.3px;height:25.75px;padding-top:3.6px">抽绳垃圾袋家用手提背心平口加<br>厚大号塑料袋收纳袋</div>
  <div class="abs pc" style="left:1150.7px;top:726.65px;width:38.6px;height:25.75px;line-height:27.95px">2.01</div>
  <div class="abs pc" style="left:1189.3px;top:726.65px;width:146.3px;height:25.75px;line-height:27.95px">88天天红包正式</div>
  <div class="abs pc" style="left:635.5px;top:752.4px;width:32px;height:25.75px;line-height:27.95px">5</div>
  <div class="abs pc" style="left:667.5px;top:752.4px;width:52.9px;height:25.75px;line-height:27.95px">淘工厂自营</div>
  <div class="abs pc" style="left:720.4px;top:752.4px;width:93.6px;height:25.75px;line-height:27.95px">4337392464950414910</div>
  <div class="abs pc" style="left:814px;top:752.4px;width:73.6px;height:25.75px;line-height:27.95px">3354411049</div>
  <div class="abs pc" style="left:887.6px;top:752.4px;width:70.7px;height:25.75px;line-height:27.95px">2025/5/14 7:45</div>
  <div class="abs pc" style="left:958.3px;top:752.4px;width:67.1px;height:25.75px;line-height:27.95px">678683335701</div>
  <div class="abs pc pm" style="left:1025.4px;top:752.4px;width:125.3px;height:25.75px;padding-top:2px;overflow:hidden">垃圾袋家用加厚抽绳自动收口中<br>号大号黑色家用厨房酒店手提塑<br>料袋</div>
  <div class="abs pc" style="left:1150.7px;top:752.4px;width:38.6px;height:25.75px;line-height:27.95px">2.01</div>
  <div class="abs pc" style="left:1189.3px;top:752.4px;width:146.3px;height:25.75px;line-height:27.95px">88天天红包正式</div>
  <div class="abs pc" style="left:635.5px;top:778.15px;width:32px;height:25.75px;line-height:27.95px">6</div>
  <div class="abs pc" style="left:667.5px;top:778.15px;width:52.9px;height:25.75px;line-height:27.95px">淘工厂自营</div>
  <div class="abs pc" style="left:720.4px;top:778.15px;width:93.6px;height:25.75px;line-height:27.95px">2564144186172156673</div>
  <div class="abs pc" style="left:814px;top:778.15px;width:73.6px;height:25.75px;line-height:27.95px">1602157366</div>
  <div class="abs pc" style="left:887.6px;top:778.15px;width:70.7px;height:25.75px;line-height:27.95px">2025/5/14 8:06</div>
  <div class="abs pc" style="left:958.3px;top:778.15px;width:67.1px;height:25.75px;line-height:27.95px">678683335701</div>
  <div class="abs pc pm" style="left:1025.4px;top:778.15px;width:125.3px;height:25.75px;padding-top:2px;overflow:hidden">垃圾袋家用加厚抽绳自动收口中<br>号大号黑色家用厨房酒店手提塑<br>料袋</div>
  <div class="abs pc" style="left:1150.7px;top:778.15px;width:38.6px;height:25.75px;line-height:27.95px">2.01</div>
  <div class="abs pc" style="left:1189.3px;top:778.15px;width:146.3px;height:25.75px;line-height:27.95px">88天天红包正式</div>
  <div class="abs pc" style="left:635.5px;top:803.9px;width:32px;height:25.75px;line-height:27.95px">7</div>
  <div class="abs pc" style="left:667.5px;top:803.9px;width:52.9px;height:25.75px;line-height:27.95px">淘工厂自营</div>
  <div class="abs pc" style="left:720.4px;top:803.9px;width:93.6px;height:25.75px;line-height:27.95px">2564649265953159998</div>
  <div class="abs pc" style="left:814px;top:803.9px;width:73.6px;height:25.75px;line-height:27.95px">2587159899</div>
  <div class="abs pc" style="left:887.6px;top:803.9px;width:70.7px;height:25.75px;line-height:27.95px">2025/5/14 8:25</div>
  <div class="abs pc" style="left:958.3px;top:803.9px;width:67.1px;height:25.75px;line-height:27.95px">834414026800</div>
  <div class="abs pc pm" style="left:1025.4px;top:803.9px;width:125.3px;height:25.75px;padding-top:3.6px">垃圾袋抽绳手提加厚特厚家用塑<br>料袋大黑色彩色收纳袋</div>
  <div class="abs pc" style="left:1150.7px;top:803.9px;width:38.6px;height:25.75px;line-height:27.95px">2.01</div>
  <div class="abs pc" style="left:1189.3px;top:803.9px;width:146.3px;height:25.75px;line-height:27.95px">88天天红包正式</div>
  <div class="abs pc" style="left:635.5px;top:829.65px;width:32px;height:25.75px;line-height:27.95px">8</div>
  <div class="abs pc" style="left:667.5px;top:829.65px;width:52.9px;height:25.75px;line-height:27.95px">淘工厂自营</div>
  <div class="abs pc" style="left:720.4px;top:829.65px;width:93.6px;height:25.75px;line-height:27.95px">2563923435175957973</div>
  <div class="abs pc" style="left:814px;top:829.65px;width:73.6px;height:25.75px;line-height:27.95px">4589957379</div>
  <div class="abs pc" style="left:887.6px;top:829.65px;width:70.7px;height:25.75px;line-height:27.95px">2025/5/14 11:31</div>
  <div class="abs pc" style="left:958.3px;top:829.65px;width:67.1px;height:25.75px;line-height:27.95px">639279123806</div>
  <div class="abs pc pm" style="left:1025.4px;top:829.65px;width:125.3px;height:25.75px;padding-top:3.6px">抽绳垃圾袋家用手提背心平口加<br>厚大号塑料袋收纳袋</div>
  <div class="abs pc" style="left:1150.7px;top:829.65px;width:38.6px;height:25.75px;line-height:27.95px">2.01</div>
  <div class="abs pc" style="left:1189.3px;top:829.65px;width:146.3px;height:25.75px;line-height:27.95px">88天天红包正式</div>
  <div class="abs pc" style="left:635.5px;top:855.4px;width:32px;height:25.75px;line-height:27.95px">9</div>
  <div class="abs pc" style="left:667.5px;top:855.4px;width:52.9px;height:25.75px;line-height:27.95px">淘工厂自营</div>
  <div class="abs pc" style="left:720.4px;top:855.4px;width:93.6px;height:25.75px;line-height:27.95px">4337676975562963210</div>
  <div class="abs pc" style="left:814px;top:855.4px;width:73.6px;height:25.75px;line-height:27.95px">1120961032</div>
  <div class="abs pc" style="left:887.6px;top:855.4px;width:70.7px;height:25.75px;line-height:27.95px">2025/5/14 11:50</div>
  <div class="abs pc" style="left:958.3px;top:855.4px;width:67.1px;height:25.75px;line-height:27.95px">834414026800</div>
  <div class="abs pc pm" style="left:1025.4px;top:855.4px;width:125.3px;height:25.75px;padding-top:3.6px">垃圾袋抽绳手提加厚特厚家用塑<br>料袋大黑色彩色收纳袋</div>
  <div class="abs pc" style="left:1150.7px;top:855.4px;width:38.6px;height:25.75px;line-height:27.95px">2.01</div>
  <div class="abs pc" style="left:1189.3px;top:855.4px;width:146.3px;height:25.75px;line-height:27.95px">88天天红包正式</div>
  <div class="abs pc" style="left:635.5px;top:881.15px;width:32px;height:25.75px;line-height:27.95px">10</div>
  <div class="abs pc" style="left:667.5px;top:881.15px;width:52.9px;height:25.75px;line-height:27.95px">淘工厂自营</div>
  <div class="abs pc" style="left:720.4px;top:881.15px;width:93.6px;height:25.75px;line-height:27.95px">4337699007430021701</div>
  <div class="abs pc" style="left:814px;top:881.15px;width:73.6px;height:25.75px;line-height:27.95px">499020117</div>
  <div class="abs pc" style="left:887.6px;top:881.15px;width:70.7px;height:25.75px;line-height:27.95px">2025/5/14 12:03</div>
  <div class="abs pc" style="left:958.3px;top:881.15px;width:67.1px;height:25.75px;line-height:27.95px">834414026800</div>
  <div class="abs pc pm" style="left:1025.4px;top:881.15px;width:125.3px;height:25.75px;padding-top:3.6px">垃圾袋抽绳手提加厚特厚家用塑<br>料袋大黑色彩色收纳袋</div>
  <div class="abs pc" style="left:1150.7px;top:881.15px;width:38.6px;height:25.75px;line-height:27.95px">2.01</div>
  <div class="abs pc" style="left:1189.3px;top:881.15px;width:146.3px;height:25.75px;line-height:27.95px">省钱卡动态门槛通用红包1天有效期</div>
  <div class="abs gl" style="left:635.5px;top:593.9px;width:717.5px;height:1px"></div>
  <div class="abs gl" style="left:635.5px;top:625.2px;width:717.5px;height:1px"></div>
  <div class="abs gl" style="left:635.5px;top:648.9px;width:717.5px;height:1px"></div>
  <div class="abs gl" style="left:635.5px;top:674.65px;width:717.5px;height:1px"></div>
  <div class="abs gl" style="left:635.5px;top:700.4px;width:717.5px;height:1px"></div>
  <div class="abs gl" style="left:635.5px;top:726.15px;width:717.5px;height:1px"></div>
  <div class="abs gl" style="left:635.5px;top:751.9px;width:717.5px;height:1px"></div>
  <div class="abs gl" style="left:635.5px;top:777.65px;width:717.5px;height:1px"></div>
  <div class="abs gl" style="left:635.5px;top:803.4px;width:717.5px;height:1px"></div>
  <div class="abs gl" style="left:635.5px;top:829.15px;width:717.5px;height:1px"></div>
  <div class="abs gl" style="left:635.5px;top:854.9px;width:717.5px;height:1px"></div>
  <div class="abs gl" style="left:635.5px;top:880.65px;width:717.5px;height:1px"></div>
  <div class="abs gl" style="left:635px;top:593.9px;width:1px;height:308.6px"></div>
  <div class="abs gl" style="left:667px;top:625.7px;width:1px;height:277.3px"></div>
  <div class="abs gl" style="left:719.9px;top:625.7px;width:1px;height:277.3px"></div>
  <div class="abs gl" style="left:813.5px;top:625.7px;width:1px;height:277.3px"></div>
  <div class="abs gl" style="left:887.1px;top:625.7px;width:1px;height:277.3px"></div>
  <div class="abs gl" style="left:957.8px;top:625.7px;width:1px;height:277.3px"></div>
  <div class="abs gl" style="left:1024.9px;top:625.7px;width:1px;height:277.3px"></div>
  <div class="abs gl" style="left:1150.2px;top:625.7px;width:1px;height:277.3px"></div>
  <div class="abs gl" style="left:1188.8px;top:625.7px;width:1px;height:277.3px"></div>
  <div class="abs gl" style="left:1335.1px;top:625.7px;width:1px;height:277.3px"></div>
  <div class="abs" style="left:563px;top:498px;width:790px;height:405px;overflow:hidden">
  <div class="abs wm" style="left:-16.5px;top:240.5px">仅用于参与杭州互联网法院诉讼</div>
  <div class="abs wm" style="left:251.2px;top:240.5px">仅用于参与杭州互联网法院诉讼</div>
  <div class="abs wm" style="left:513.5px;top:241.5px">仅用于参与杭州互联网法院诉讼</div>
  <div class="abs wm" style="left:781.2px;top:241.5px">仅用于参与杭州互联网法院诉讼</div>
  <div class="abs wm" style="left:-18.5px;top:504.2px">仅用于参与杭州互联网法院诉讼</div>
  <div class="abs wm" style="left:249.2px;top:504.2px">仅用于参与杭州互联网法院诉讼</div>
  <div class="abs wm" style="left:516.9px;top:504.2px">仅用于参与杭州互联网法院诉讼</div>
  <div class="abs wm" style="left:784.5px;top:504.2px">仅用于参与杭州互联网法院诉讼</div>
  </div>
  <div class="abs" style="left:1212px;top:855px;font-size:12px;line-height:16px;font-weight:bold;color:rgba(90,90,90,.38);transform-origin:0 8px;transform:rotate(-19.700deg);font-family:'Liberation Sans','Noto Sans CJK SC',sans-serif">赚客吧，有奖一起赚！</div>
  <div class="abs" style="left:1218px;top:869px;font-size:13.600px;line-height:18px;font-weight:bold;font-style:italic;color:rgba(90,90,90,.38);transform-origin:0 9px;transform:rotate(-19.700deg);font-family:'Liberation Sans',sans-serif">www.zuanke8.com</div>
  <div class="abs" style="left:1214px;top:873px;width:100px;height:1px;background:rgba(90,90,90,.3);transform-origin:0 0;transform:rotate(-19.700deg)"></div>
  <!-- PDFVIEW-END -->
</div>

<!-- ARROW -->
<svg class="abs" style="left:300px;top:640px" width="440" height="40" viewBox="300 640 440 40"><path d="M313.700 665.100L705.500 657.700V654.300L722 662.200L705.500 669.800V665.800L313.700 666.300z" fill="#f5363c"/></svg>
<!-- /ARROW -->
</body>
</html>
